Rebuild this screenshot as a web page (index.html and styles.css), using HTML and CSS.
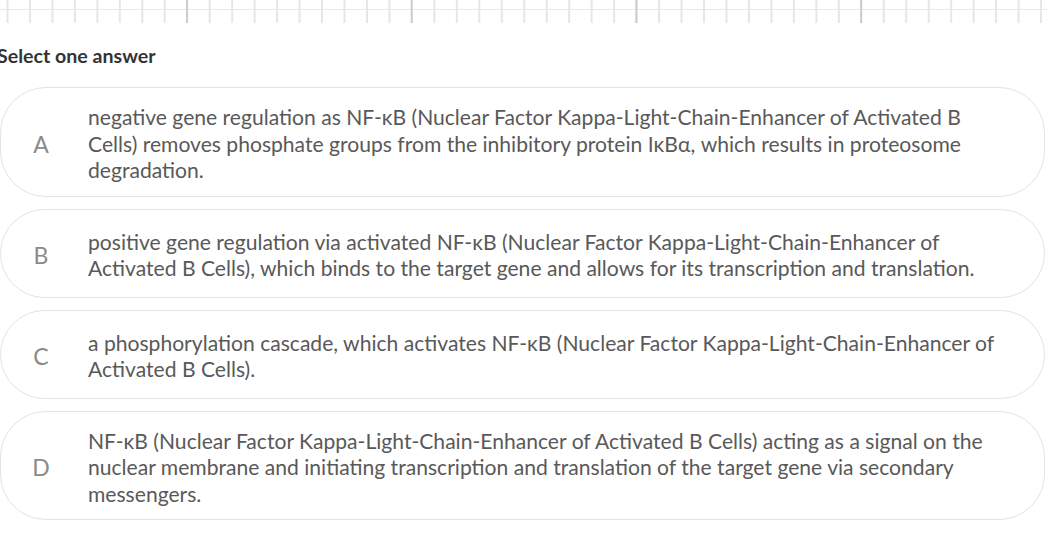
FILE: index.html
```html
<!DOCTYPE html>
<html>
<head>
<meta charset="utf-8">
<link rel="stylesheet" href="styles.css">
</head>
<body>
<div class="grid-strip"></div>
<div class="question">
  <h2 class="prompt">Select one answer</h2>
  <div class="options">
    <div class="option">
      <span class="letter">A</span>
      <span class="text">negative gene regulation as NF-κB (Nuclear Factor Kappa-Light-Chain-Enhancer of Activated B Cells) removes phosphate groups from the inhibitory protein IκBα, which results in proteosome degradation.</span>
    </div>
    <div class="option">
      <span class="letter">B</span>
      <span class="text">positive gene regulation via activated NF-κB (Nuclear Factor Kappa-Light-Chain-Enhancer of Activated B Cells), which binds to the target gene and allows for its transcription and translation.</span>
    </div>
    <div class="option">
      <span class="letter">C</span>
      <span class="text">a phosphorylation cascade, which activates NF-κB (Nuclear Factor Kappa-Light-Chain-Enhancer of Activated B Cells).</span>
    </div>
    <div class="option">
      <span class="letter">D</span>
      <span class="text">NF-κB (Nuclear Factor Kappa-Light-Chain-Enhancer of Activated B Cells) acting as a signal on the nuclear membrane and initiating transcription and translation of the target gene via secondary messengers.</span>
    </div>
  </div>
</div>
</body>
</html>
```

FILE: styles.css
```css
html, body {
  margin: 0;
  padding: 0;
  background: #ffffff;
  overflow: hidden;
}
body {
  font-family: Lato, "Open Sans", "Liberation Sans", sans-serif;
  width: 1047px;
  height: 538px;
}
.grid-strip {
  height: 23px;
  background-image:
    linear-gradient(to right, #cdcdcd 2px, transparent 2px),
    linear-gradient(to bottom, transparent 9px, #e8e8e8 9px, #e8e8e8 10px, transparent 10px),
    linear-gradient(to right, #e6e6e6 1.5px, transparent 1.5px);
  background-size: 224.7px 100%, 100% 100%, 22.47px 100%;
  background-position: 186px 0, 0 0, 6.5px 0;
  background-repeat: repeat-x, no-repeat, repeat-x;
}
.question {
  padding-top: 21px;
}
.prompt {
  margin: 0 0 19px -3px;
  font-size: 19.6px;
  font-weight: 700;
  color: #333333;
  line-height: 24px;
}
.options {
  display: flex;
  flex-direction: column;
  gap: 12px;
  width: 1045px;
}
.option {
  display: flex;
  align-items: center;
  min-height: 89px;
  box-sizing: border-box;
  border: 1.5px solid #e3e3e3;
  border-radius: 46px;
  padding: 16px 40px 12px 0;
}
.letter {
  flex: 0 0 87px;
  text-align: center;
  box-sizing: border-box;
  padding-right: 7px;
  font-size: 23px;
  color: #8a8a8a;
}
.text {
  font-size: 21.1px;
  line-height: 26.5px;
  color: #595959;
}
```
